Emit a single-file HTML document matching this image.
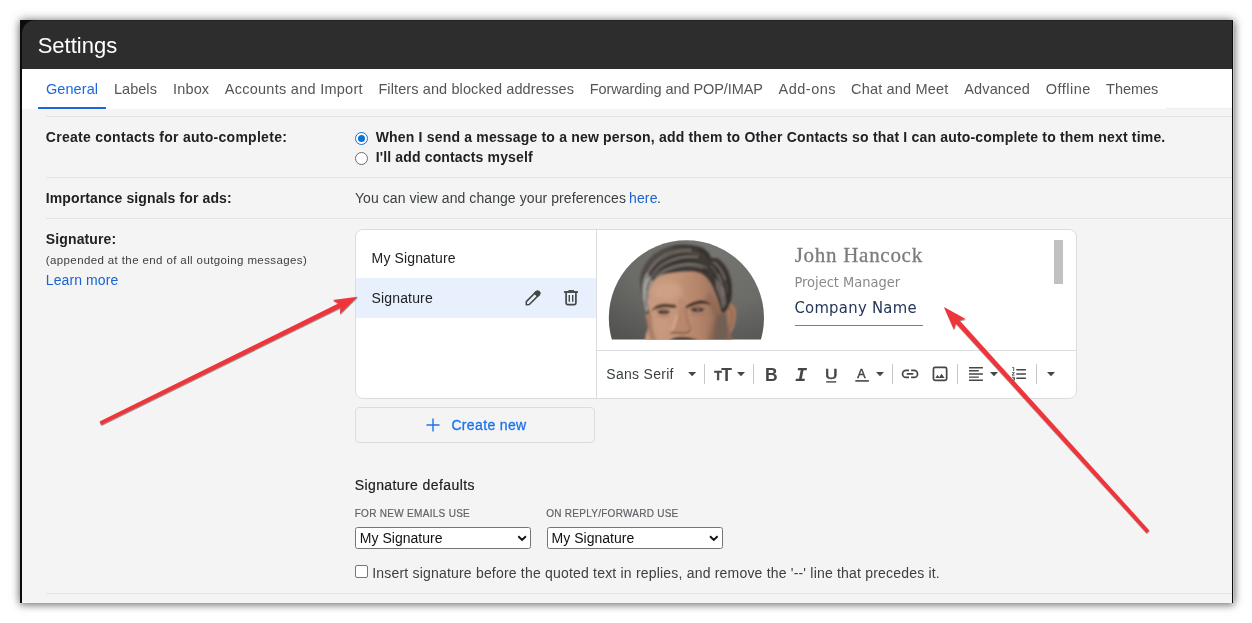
<!DOCTYPE html>
<html lang="en">
<head>
<meta charset="utf-8">
<title>Settings</title>
<style>
html,body{margin:0;padding:0;background:#fff;}
body{width:1252px;height:623px;overflow:hidden;position:relative;font-family:"Liberation Sans",Arial,sans-serif;}
.t{position:absolute;white-space:pre;margin:0;padding:0;display:block;text-decoration:none;font-style:normal;}
#win{position:absolute;left:20px;top:20px;width:1214px;height:583px;background:#f4f4f4;box-shadow:0 0 9px rgba(0,0,0,.5),0 3px 7px rgba(0,0,0,.22);}
#page{position:absolute;left:0;top:0;width:1252px;height:623px;will-change:transform;}
#edgeL{position:absolute;left:20.4px;top:20px;width:1.6px;height:583px;background:#0c0c0c;}
#edgeR{position:absolute;left:1232px;top:20px;width:1px;height:583px;background:#0c0c0c;}
#edgeY{position:absolute;left:1233px;top:21px;width:1.3px;height:582px;background:#e4dc00;}
#hdrbg{position:absolute;left:21px;top:20.3px;width:18px;height:18px;background:#0c0c0c;}
#hdr{position:absolute;left:22px;top:20.3px;width:1210px;height:48.4px;background:linear-gradient(#232323 0,#232323 1.2px,#2d2d2d 1.3px);border-top-left-radius:14px;}
#tabs{position:absolute;left:22px;top:68.7px;width:1210px;height:40.5px;background:#fff;}
#tabsr{position:absolute;left:1166px;top:108px;width:66px;height:1.2px;background:#eceef1;}
#tabsel{position:absolute;left:38px;top:106.800px;width:68px;height:2.200px;background:#1a67d8;}
.hr{position:absolute;left:46px;width:1186px;height:1px;background:#e3e3e3;}
.radio{position:absolute;width:11px;height:11px;border:1px solid #6b6b6b;border-radius:50%;background:#fff;}
.radio.on{border-color:#0b72da;border-width:1.500px;margin:-0.250px;}
.radio.on::after{content:"";position:absolute;left:1.75px;top:1.75px;width:7.500px;height:7.500px;border-radius:50%;background:#0b72da;}
#sigbox{position:absolute;left:355px;top:229px;width:720px;height:168px;border:1px solid #dadce0;border-radius:8px;background:#fff;overflow:hidden;}
#sigsel{position:absolute;left:356px;top:278px;width:240px;height:40px;background:#e8f0fe;}
#vdiv{position:absolute;left:596px;top:230px;width:1px;height:168px;background:#dadce0;}
#hdiv{position:absolute;left:597px;top:350px;width:479px;height:1px;background:#dadce0;}
#thumb{position:absolute;left:1054px;top:240px;width:9px;height:44px;background:#c1c1c1;}
#compline{position:absolute;left:795.2px;top:325px;width:127.700px;height:1px;background:#7d7d7d;}
#createbtn{position:absolute;left:355px;top:407px;width:238px;height:34px;border:1px solid #dadce0;border-radius:4px;background:transparent;}
.sel{position:absolute;top:527.2px;width:173.4px;height:19.4px;border:1px solid #767676;border-radius:2.5px;background:#fff;}
#chk{position:absolute;left:355px;top:564.9px;width:11.100px;height:11.100px;border:1px solid #767676;border-radius:2px;background:#fff;}
.tsep{position:absolute;top:364px;width:1px;height:20px;background:#c3c8c8;}
svg{position:absolute;overflow:visible;}
#t_settings{left:37.7px;top:29.78px;font:400 22px/31px "Liberation Sans", Arial, sans-serif;color:#ffffff;letter-spacing:0.006px;}
#tab0{left:46.0px;top:78.78px;font:400 14.5px/20px "Liberation Sans", Arial, sans-serif;color:#1a69d9;letter-spacing:0.070px;}
#tab1{left:113.9px;top:78.78px;font:400 14.5px/20px "Liberation Sans", Arial, sans-serif;color:#555555;letter-spacing:0.056px;}
#tab2{left:173.1px;top:78.78px;font:400 14.5px/20px "Liberation Sans", Arial, sans-serif;color:#555555;letter-spacing:0.133px;}
#tab3{left:224.7px;top:78.78px;font:400 14.5px/20px "Liberation Sans", Arial, sans-serif;color:#555555;letter-spacing:0.273px;}
#tab4{left:378.4px;top:78.78px;font:400 14.5px/20px "Liberation Sans", Arial, sans-serif;color:#555555;letter-spacing:0.106px;}
#tab5{left:589.7px;top:78.78px;font:400 14.5px/20px "Liberation Sans", Arial, sans-serif;color:#555555;letter-spacing:-0.072px;}
#tab6{left:778.5px;top:78.78px;font:400 14.5px/20px "Liberation Sans", Arial, sans-serif;color:#555555;letter-spacing:0.500px;}
#tab7{left:851.0px;top:78.78px;font:400 14.5px/20px "Liberation Sans", Arial, sans-serif;color:#555555;letter-spacing:0.182px;}
#tab8{left:964.2px;top:78.78px;font:400 14.5px/20px "Liberation Sans", Arial, sans-serif;color:#555555;letter-spacing:0.159px;}
#tab9{left:1045.7px;top:78.78px;font:400 14.5px/20px "Liberation Sans", Arial, sans-serif;color:#555555;letter-spacing:0.493px;}
#tab10{left:1106.1px;top:78.78px;font:400 14.5px/20px "Liberation Sans", Arial, sans-serif;color:#555555;letter-spacing:-0.035px;}
#l_create{left:45.8px;top:127.05px;font:700 14px/20px "Liberation Sans", Arial, sans-serif;color:#202124;letter-spacing:0.280px;}
#l_imp{left:45.8px;top:188.05px;font:700 14px/20px "Liberation Sans", Arial, sans-serif;color:#202124;letter-spacing:0.117px;}
#l_sig{left:45.8px;top:228.75px;font:700 14px/20px "Liberation Sans", Arial, sans-serif;color:#202124;letter-spacing:0.127px;}
#l_app{left:45.8px;top:252.32px;font:400 11.5px/16px "Liberation Sans", Arial, sans-serif;color:#3c4043;letter-spacing:0.385px;}
#l_learn{left:45.8px;top:270.35px;font:400 14px/20px "Liberation Sans", Arial, sans-serif;color:#1a62d0;letter-spacing:0.098px;}
#r_when{left:375.7px;top:127.35px;font:700 14px/20px "Liberation Sans", Arial, sans-serif;color:#202124;letter-spacing:0.182px;}
#r_ill{left:375.7px;top:147.05px;font:700 14px/20px "Liberation Sans", Arial, sans-serif;color:#202124;letter-spacing:0.151px;}
#r_you{left:354.9px;top:187.65px;font:400 14px/20px "Liberation Sans", Arial, sans-serif;color:#3c4043;letter-spacing:0.078px;}
#r_here{left:629.0px;top:187.65px;font:400 14px/20px "Liberation Sans", Arial, sans-serif;color:#1a62d0;letter-spacing:0.150px;}
#r_dot{left:657.0px;top:187.65px;font:400 14px/20px "Liberation Sans", Arial, sans-serif;color:#3c4043;letter-spacing:0.089px;}
#s_my{left:371.6px;top:248.25px;font:400 14px/20px "Liberation Sans", Arial, sans-serif;color:#202124;letter-spacing:0.127px;}
#s_sig{left:371.6px;top:288.15px;font:400 14px/20px "Liberation Sans", Arial, sans-serif;color:#202124;letter-spacing:0.143px;}
#s_create{left:451.4px;top:414.85px;font:400 14px/20px "Liberation Sans", Arial, sans-serif;color:#1a73e8;letter-spacing:0.354px;-webkit-text-stroke:0.3px #1a73e8;}
#p_name{left:794.7px;top:241.21px;font:400 21px/29px "Liberation Serif", Georgia, serif;color:#7c7c7c;letter-spacing:0.719px;-webkit-text-stroke:0.3px #7c7c7c;}
#p_role{left:794.5px;top:271.88px;font:400 14.5px/20px "DejaVu Sans Condensed", "DejaVu Sans", sans-serif;color:#8a8a8a;letter-spacing:-0.021px;}
#p_comp{left:794.4px;top:295.69px;font:400 16.5px/23px "DejaVu Sans Condensed", "DejaVu Sans", sans-serif;color:#24355a;letter-spacing:0.274px;}
#tb_font{left:606.3px;top:363.85px;font:400 14px/20px "Liberation Sans", Arial, sans-serif;color:#3c4043;letter-spacing:0.287px;}
#d_title{left:354.7px;top:474.95px;font:400 14px/20px "Liberation Sans", Arial, sans-serif;color:#202124;letter-spacing:0.407px;-webkit-text-stroke:0.2px #202124;}
#d_new{left:354.7px;top:506.54px;font:400 10px/14px "Liberation Sans", Arial, sans-serif;color:#5f6368;letter-spacing:0.299px;-webkit-text-stroke:0.2px #5f6368;}
#d_reply{left:546.3px;top:506.54px;font:400 10px/14px "Liberation Sans", Arial, sans-serif;color:#5f6368;letter-spacing:0.260px;-webkit-text-stroke:0.2px #5f6368;}
#d_sel1{left:359.8px;top:527.95px;font:400 14px/20px "Liberation Sans", Arial, sans-serif;color:#111111;letter-spacing:0.018px;}
#d_sel2{left:551.6px;top:527.95px;font:400 14px/20px "Liberation Sans", Arial, sans-serif;color:#111111;letter-spacing:0.018px;}
#d_ins{left:372.2px;top:562.55px;font:400 14px/20px "Liberation Sans", Arial, sans-serif;color:#3c4043;letter-spacing:0.196px;}
#g_t1{left:714.2px;top:367.27px;font:700 12.5px/18px "Liberation Sans", Arial, sans-serif;color:#444746;letter-spacing:0.000px;-webkit-text-stroke:0.5px #444746;}
#g_t2{left:721.2px;top:362.54px;font:700 17.5px/24px "Liberation Sans", Arial, sans-serif;color:#444746;letter-spacing:0.000px;}
#g_b{left:765.0px;top:362.94px;font:700 17.5px/24px "Liberation Sans", Arial, sans-serif;color:#444746;letter-spacing:0.000px;}
#g_i{left:795.0px;top:361.67px;font:700 20px/28px "Liberation Mono", monospace;color:#444746;letter-spacing:0.000px;font-style:italic;}
#g_u{left:824.6px;top:362.83px;font:400 15.5px/22px "Liberation Sans", Arial, sans-serif;color:#444746;letter-spacing:0.000px;transform:scaleX(1.12);transform-origin:0 0;-webkit-text-stroke:0.6px #444746;}
#g_a{left:857.3px;top:365.27px;font:400 12.5px/18px "Liberation Sans", Arial, sans-serif;color:#444746;letter-spacing:0.000px;-webkit-text-stroke:0.5px #444746;}
</style>
</head>
<body>
<div id="win"></div>
<div id="page">
  <div id="edgeL"></div><div id="edgeR"></div><div id="edgeY"></div>
  <div id="hdrbg"></div>
  <header id="hdr"></header>
  <h1 class="t" id="t_settings">Settings</h1>
  <nav id="tabs"></nav>
  <div id="tabsr"></div>
  <div id="tabsel"></div>
  <a class="t" id="tab0">General</a><a class="t" id="tab1">Labels</a><a class="t" id="tab2">Inbox</a><a class="t" id="tab3">Accounts and Import</a><a class="t" id="tab4">Filters and blocked addresses</a><a class="t" id="tab5">Forwarding and POP/IMAP</a><a class="t" id="tab6">Add-ons</a><a class="t" id="tab7">Chat and Meet</a><a class="t" id="tab8">Advanced</a><a class="t" id="tab9">Offline</a><a class="t" id="tab10">Themes</a>

  <div class="hr" style="top:116px"></div>
  <strong class="t" id="l_create">Create contacts for auto-complete:</strong>
  <div class="radio on" style="left:355px;top:132px"></div>
  <label class="t" id="r_when">When I send a message to a new person, add them to Other Contacts so that I can auto-complete to them next time.</label>
  <div class="radio" style="left:355px;top:152px"></div>
  <label class="t" id="r_ill">I&#x27;ll add contacts myself</label>
  <div class="hr" style="top:177px"></div>
  <strong class="t" id="l_imp">Importance signals for ads:</strong>
  <span class="t" id="r_you">You can view and change your preferences </span><a class="t" id="r_here">here</a><span class="t" id="r_dot">.</span>
  <div class="hr" style="top:218px"></div>
  <strong class="t" id="l_sig">Signature:</strong>
  <span class="t" id="l_app">(appended at the end of all outgoing messages)</span>
  <a class="t" id="l_learn">Learn more</a>

  <section id="sigbox"></section>
  <div id="sigsel"></div>
  <div id="vdiv"></div>
  <div id="hdiv"></div>
  <span class="t" id="s_my">My Signature</span>
  <span class="t" id="s_sig">Signature</span>
  <svg id="rowicons" width="70" height="30" style="left:520px;top:284px" viewBox="520 284 70 30" aria-hidden="true">
<g fill="none" stroke="#444746" stroke-width="1.5" stroke-linejoin="round" stroke-linecap="round">
<path d="M526.3 304.7v-3.1l9.7-9.7a2.1 2.1 0 0 1 2.97 2.97l-9.7 9.7z"/>
<path d="M536 291.9a2.1 2.1 0 0 1 2.97 2.97l-1.4 1.4-2.97-2.97z" fill="#444746"/>
</g>
<g fill="none" stroke="#444746" stroke-width="1.7">
<path d="M564.1 292h13.8" stroke-width="1.9"/>
<path d="M568.4 290.7h5.6" stroke-width="1.3"/>
<path d="M566.1 292.8v10.3a1.5 1.5 0 0 0 1.5 1.5h6.8a1.5 1.5 0 0 0 1.5-1.5v-10.3"/>
<path d="M569.3 294.9v6.9M572.7 294.9v6.9" stroke-width="1.4"/>
</g>
<g stroke="#1a73e8" stroke-width="1.5"></g>
</svg>
<svg id="plus" width="16" height="16" style="left:425px;top:417px" viewBox="0 0 16 16" aria-hidden="true"><path d="M8 1.5v13M1.5 8h13" stroke="#1a73e8" stroke-width="1.4" fill="none"/></svg>
  <svg id="portrait" width="457" height="120" style="left:597px;top:230px" viewBox="597 230 457 120" role="img" aria-label="Portrait photo">
<defs>
<clipPath id="pc"><circle cx="686.4" cy="317.9" r="77.6"/></clipPath>
<clipPath id="pr"><rect x="597" y="230" width="457" height="109.5"/></clipPath>
<radialGradient id="pbg" cx="0.62" cy="0.12" r="0.95"><stop offset="0" stop-color="#757572"/><stop offset="0.55" stop-color="#6b6b68"/><stop offset="1" stop-color="#535351"/></radialGradient>
<linearGradient id="skin" x1="0" y1="0" x2="1" y2="0"><stop offset="0" stop-color="#c89b80"/><stop offset="0.3" stop-color="#c6977b"/><stop offset="0.62" stop-color="#b4846a"/><stop offset="0.85" stop-color="#96705a"/><stop offset="1" stop-color="#86624f"/></linearGradient>
<linearGradient id="hair" x1="0" y1="0" x2="1" y2="0.6"><stop offset="0" stop-color="#5e5853"/><stop offset="0.4" stop-color="#443e39"/><stop offset="1" stop-color="#38322e"/></linearGradient>
<filter id="pb" x="-5%" y="-5%" width="110%" height="110%"><feGaussianBlur stdDeviation="0.85"/></filter>
<filter id="pb3" x="-30%" y="-30%" width="160%" height="160%"><feGaussianBlur stdDeviation="1.8"/></filter>
<filter id="pb2" x="-30%" y="-30%" width="160%" height="160%"><feGaussianBlur stdDeviation="2.5"/></filter>
</defs>
<g clip-path="url(#pr)"><g clip-path="url(#pc)">
<rect x="605" y="236" width="165" height="110" fill="url(#pbg)"/>
<g filter="url(#pb)">
<path d="M726.0 304.0C726.9 298.4 729.4 302.7 731.0 303.5C732.6 304.3 734.9 306.6 735.7 309.0C736.5 311.4 736.3 315.0 736.0 318.0C735.7 321.0 735.0 324.2 734.0 327.0C733.0 329.8 731.4 332.8 730.0 334.5C728.6 336.2 726.2 342.1 725.5 337.0C724.8 331.9 725.1 309.6 726.0 304.0Z" fill="#a8785f"/>
<path d="M729 308c3 2 4 7 3 13-1 5-3 9-5 11" stroke="#8a5f4a" stroke-width="1.600" fill="none" opacity=".7"/>
<path d="M645.8 313.0C645.8 308.7 647.5 304.7 648.2 300.0C648.9 295.3 648.4 289.2 650.0 285.0C651.6 280.8 655.0 277.3 658.0 275.0C661.0 272.7 664.2 271.9 668.0 271.0C671.8 270.1 676.3 269.8 681.0 269.5C685.7 269.2 691.8 268.9 696.0 269.5C700.2 270.1 703.2 270.9 706.0 273.0C708.8 275.1 711.0 278.7 713.0 282.0C715.0 285.3 716.5 289.2 718.0 293.0C719.5 296.8 720.8 301.8 722.0 305.0C723.2 308.2 724.7 308.7 725.5 312.0C726.3 315.3 726.8 319.5 727.0 325.0C727.2 330.5 739.5 341.7 727.0 345.0C714.5 348.3 665.2 348.2 652.0 345.0C638.8 341.8 649.0 331.3 648.0 326.0C647.0 320.7 645.8 317.3 645.8 313.0Z" fill="url(#skin)"/>
<g filter="url(#pb3)">
<path d="M717 314c3 1 6 0 9-3l1.500 14v20h-17c3-10 5-20 6.500-31z" fill="#665a52" opacity=".8"/>
<path d="M704 300c4 4 8 10 10 18-3 8-6 16-8 26h10l4-30c-2-9-6-17-11-22z" fill="#80594a" opacity=".4"/>
<!-- left edge shade -->
<path d="M646 313c0 10 2 20 6 30h5c-4-10-6-20-6-31z" fill="#8c6650" opacity=".6"/>
</g>
<path d="M645.6 312.5C644.3 309.5 642.4 299.9 641.5 294.1C640.6 288.3 639.8 282.4 640.2 277.7C640.6 273.0 642.0 269.8 643.9 266.2C645.8 262.6 648.1 259.3 651.3 256.4C654.4 253.5 658.7 250.9 662.8 249.0C666.9 247.1 671.3 245.6 675.9 244.9C680.5 244.2 686.2 244.5 690.6 244.9C695.0 245.3 699.0 246.1 702.1 247.4C705.2 248.8 707.5 251.3 709.0 253.0C710.5 254.7 709.7 256.6 711.3 257.6C712.9 258.6 715.9 257.1 718.5 258.8C721.1 260.5 724.7 264.5 726.7 267.9C728.8 271.3 729.9 275.2 730.8 279.3C731.7 283.4 732.0 288.3 731.9 292.4C731.8 296.5 731.0 300.7 729.9 303.9C728.8 307.1 726.9 310.1 725.5 311.5C724.1 312.9 722.7 313.4 721.7 312.1C720.7 310.8 720.4 307.2 719.3 303.9C718.2 300.6 716.7 295.9 715.2 292.4C713.7 288.8 712.2 285.5 710.3 282.6C708.4 279.7 706.2 277.0 703.7 275.2C701.2 273.4 699.3 272.4 695.5 271.9C691.7 271.3 685.4 271.6 680.8 271.9C676.2 272.2 671.5 272.8 667.7 273.6C663.9 274.4 660.5 275.4 657.9 276.9C655.3 278.4 653.6 280.0 652.1 282.6C650.6 285.2 649.5 289.1 648.8 292.4C648.1 295.7 647.9 299.0 648.0 302.3C648.1 305.6 649.7 310.4 649.3 312.1C648.9 313.8 646.9 315.5 645.6 312.5Z" fill="url(#hair)"/>
<!-- gray temple left -->
<path d="M642.500 292c-0.500-8 1-15 5-20 2 3 3.500 6 5 9-3 6-4.500 13-4.500 20l0.800 9-3 2.500c-1.800-6-3-13-3.300-20.500z" fill="#a29e9a" opacity=".9"/>
<path d="M716 288c3 6 5 13 6.500 21l3.500-5c0-7-1.500-13-4-18-2-3-4-6-6.500-8z" fill="#77716c" opacity=".8"/>
<g fill="none" stroke="#857e78" stroke-width="2.200" stroke-linecap="round" opacity=".7">
<path d="M648 272c4-8 10-14 18-18 8-3.500 16-5 25-4.500" stroke-width="1.400"/>
<path d="M650 280c4-9 11-15 20-19 9-4 18-5 27-4"/>
<path d="M656 277c6-6 14-10 24-12 9-2 18-1.500 26 2"/>
<path d="M714 262c5 4 9 10 11 17"/>
<path d="M719 275c3 6 4.500 13 4.500 20"/>
</g>
<g fill="none" stroke="#2b2622" stroke-width="1.500" stroke-linecap="round" opacity=".6">
<path d="M647.500 278c4-9 11-16 20-20 9-4 18-5.500 27-4.500"/>
<path d="M660 270c8-6 18-8.500 28-8.500 6 0 13 1.500 18 5"/>
<path d="M700 250c4 2 7 5 9 9"/>
<path d="M716 268c4 5 6.500 12 7.500 19"/>
</g>
<g fill="none" stroke-linecap="round">
<path d="M644 284c2-10 8-19 17-25 9-5 19-8 30-8" stroke="#8f8984" stroke-width="1" opacity=".7"/>
<path d="M646.500 290c2-11 8-19 16-24 9-5 20-7 32-6" stroke="#2c2723" stroke-width="1" opacity=".6"/>
<path d="M653 284c5-8 12-13 21-16 9-3 19-3 28 0" stroke="#9a948e" stroke-width="1" opacity=".6"/>
<path d="M664 273c8-4 17-6 26-5 6 0.500 12 2 17 5" stroke="#2c2723" stroke-width="1.100" opacity=".55"/>
<path d="M672 247c8-1.500 17-1 25 1.500 5 1.500 9 4 11 8" stroke="#2a2521" stroke-width="1.300" opacity=".6"/>
<path d="M676 252c8-1 16 0 23 3" stroke="#7d7771" stroke-width="1" opacity=".7"/>
<path d="M713 260c6 3 10 9 13 16 2 6 3 13 3 20" stroke="#2a2521" stroke-width="1.200" opacity=".6"/>
<path d="M711 266c4 4 8 10 10 17" stroke="#847e78" stroke-width="1" opacity=".7"/>
<path d="M722 272c3 6 5 13 5.500 21" stroke="#6f6963" stroke-width="1" opacity=".7"/>
<path d="M643.500 300c0-9 2-17 6-23" stroke="#bdb9b5" stroke-width="1.200" opacity=".7"/>
<path d="M646.500 306c-1-9 0-17 3-24" stroke="#55504b" stroke-width="0.900" opacity=".7"/>
</g>
<path d="M651.6 310.6C651.7 310.1 654.3 307.2 656.0 306.1C657.7 305.0 659.8 304.4 662.0 304.0C664.2 303.6 666.7 303.8 669.0 304.0C671.3 304.2 674.6 304.6 675.7 305.3C676.8 306.0 676.7 307.6 675.4 308.0C674.1 308.4 670.4 307.4 668.0 307.4C665.6 307.3 663.1 307.4 661.0 307.7C658.9 308.0 657.1 308.8 655.5 309.3C653.9 309.8 651.5 311.1 651.6 310.6Z" fill="#4a3a30"/>
<path d="M685.8 306.3C686.5 305.4 688.8 304.0 691.0 303.0C693.2 302.0 696.5 300.8 698.8 300.5C701.1 300.2 703.0 300.3 705.0 301.0C707.0 301.7 710.8 304.0 710.8 304.5C710.8 305.0 707.0 304.2 705.0 304.1C703.0 304.1 701.0 303.9 698.8 304.2C696.6 304.5 694.0 305.2 692.0 305.9C690.0 306.6 687.5 308.1 686.5 308.2C685.5 308.3 685.0 307.2 685.8 306.3Z" fill="#3f3028"/>
<ellipse cx="663.6" cy="311.500" rx="7" ry="3" fill="#8a634e" opacity=".7"/>
<ellipse cx="697.4" cy="309.200" rx="7.500" ry="3" fill="#7f5a47" opacity=".7"/>
<ellipse cx="663.6" cy="312.300" rx="5.500" ry="2" fill="#43332c"/>
<ellipse cx="697.4" cy="309.900" rx="6" ry="2.100" fill="#43332c"/>
<ellipse cx="698" cy="309.700" rx="1.900" ry="1.400" fill="#77706a"/>
<ellipse cx="664" cy="312.200" rx="1.600" ry="1.200" fill="#6a625c"/>
<path d="M656.500 316c4 1.500 9 1.500 13.500 0" stroke="#a57b65" stroke-width="1" fill="none"/>
<path d="M690.500 314c4 1.500 10 1.500 14.500 0" stroke="#9a705b" stroke-width="1" fill="none"/>
<path d="M680.500 300v5M683.500 300.500v4" stroke="#9a6f59" stroke-width="0.900" fill="none" opacity=".7"/>
<path d="M679.500 307c-1 8-3.500 17-8 24 3 2.500 10 3 15 1.500 2-1 3.500-2.500 3.500-4.500-3-6-5.500-13-5.500-21z" fill="#b5846a" opacity=".75"/>
<path d="M676.500 316c-1 5-2 9-4 13" stroke="#d7ab92" stroke-width="2.800" fill="none" opacity=".75" stroke-linecap="round"/>
<path d="M686 309c0 7 2 14 5 20" stroke="#8f6650" stroke-width="1.600" fill="none" opacity=".6" stroke-linecap="round"/>
<path d="M670.500 333.500c4-1 9-1 13 0 3 0 5.500-1.500 6.500-3.500" stroke="#76523f" stroke-width="1.400" fill="none"/>
<path d="M668 342c3-4 8-5.200 14-5.200 7 0 13 1.500 18.500 5.200z" fill="#4b4139"/>
</g>
<ellipse cx="668" cy="291" rx="15" ry="9" fill="#d9b097" opacity=".4" filter="url(#pb2)"/>
<ellipse cx="662" cy="326" rx="8" ry="7" fill="#cc9c82" opacity=".35" filter="url(#pb2)"/>
</g></g>
</svg>
  <span class="t" id="p_name">John Hancock</span>
  <span class="t" id="p_role">Project Manager</span>
  <span class="t" id="p_comp">Company Name</span>
  <div id="compline"></div>
  <div id="thumb"></div>
  <span class="t" id="tb_font">Sans Serif</span>
  <span class="t" id="g_t1">T</span><span class="t" id="g_t2">T</span><b class="t" id="g_b">B</b><i class="t" id="g_i">I</i><u class="t" id="g_u">U</u><span class="t" id="g_a">A</span>
  <div class="tsep" style="left:704px"></div><div class="tsep" style="left:753px"></div><div class="tsep" style="left:892px"></div><div class="tsep" style="left:957px"></div><div class="tsep" style="left:1036px"></div><svg id="tbicons" width="480" height="40" style="left:597px;top:354px" viewBox="597 354 480 40" aria-hidden="true">
<path d="M688.2 372.1h8l-4.0 4.1z" fill="#444746"/><path d="M737.0 372.1h8l-4.0 4.1z" fill="#444746"/><path d="M876.0 372.1h8l-4.0 4.1z" fill="#444746"/><path d="M990.0 372.1h8l-4.0 4.1z" fill="#444746"/><path d="M1047.0 372.1h8l-4.0 4.1z" fill="#444746"/>
<g fill="none" stroke="#444746">
<path d="M826.2 381.9h10" stroke-width="1.4"/>
<path d="M855.3 380.9h13.6" stroke-width="1.6"/>
<path d="M909 370.45H906.05A3.5 3.5 0 0 0 906.05 377.45H909M911.1 370.45H914.05A3.5 3.5 0 0 1 914.05 377.45H911.1M906.8 373.95H913.3" stroke-width="1.7"/>
<rect x="933.45" y="367.35" width="13.2" height="13" rx="1.6" stroke-width="1.7"/>
<path d="M969 367.7h13.9M969 370.8h9.8M969 374h13.9M969 377.1h9.8M969 380.2h13.9" stroke-width="1.4"/>
<path d="M1016.3 369.7h9.6M1016.3 374h9.6M1016.3 378.2h9.6" stroke-width="1.4"/>
<path d="M1012.3 367.5h1.4v3.4M1012 372.7h2.4l-2.400 2.400h2.600M1012 377.300h2.400v3h-2.400M1013 378.800h1.400" stroke-width="0.9"/>
</g>
<path d="M935.5 378L937.4 374.8 939.2 377.2 941.5 373.8 944.6 378Z" fill="#444746"/>
</svg>
  <div id="createbtn"></div>
  <span class="t" id="s_create">Create new</span>
  <h2 class="t" id="d_title">Signature defaults</h2>
  <label class="t" id="d_new">FOR NEW EMAILS USE</label><label class="t" id="d_reply">ON REPLY/FORWARD USE</label>
  <div class="sel" style="left:355.3px"></div>
  <div class="sel" style="left:547px;width:174.400px"></div>
  <svg id="chev" width="380" height="12" style="left:350px;top:532px" viewBox="350 532 380 12" aria-hidden="true"><path d="M518.3 536.2l3.800 3.700 3.800-3.700M710 536.2l3.800 3.700 3.800-3.700" fill="none" stroke="#111" stroke-width="1.9"/></svg>
  <span class="t" id="d_sel1">My Signature</span><span class="t" id="d_sel2">My Signature</span>
  <div id="chk"></div>
  <label class="t" id="d_ins">Insert signature before the quoted text in replies, and remove the &#x27;--&#x27; line that precedes it.</label>
  <div class="hr" style="top:593px"></div>
  <svg id="arrows" width="1252" height="623" style="left:0;top:0" viewBox="0 0 1252 623" aria-hidden="true">
<defs><filter id="ash" x="-5%" y="-5%" width="110%" height="110%"><feDropShadow dx="0.3" dy="0.9" stdDeviation="0.45" flood-color="#000" flood-opacity=".5"/></filter></defs>
<g fill="#ee353a" filter="url(#ash)">
<polygon points="99.6,421.6 338.2,303.5 333.0,299.9 357.5,296.7 340.0,314.1 340.3,307.8 101.2,425.0"/>
<polygon points="1146.5,533.0 955.9,323.5 953.9,329.5 944.0,306.9 965.6,318.9 959.4,320.3 1149.3,530.4"/>
</g></svg>
</div>
</body>
</html>
